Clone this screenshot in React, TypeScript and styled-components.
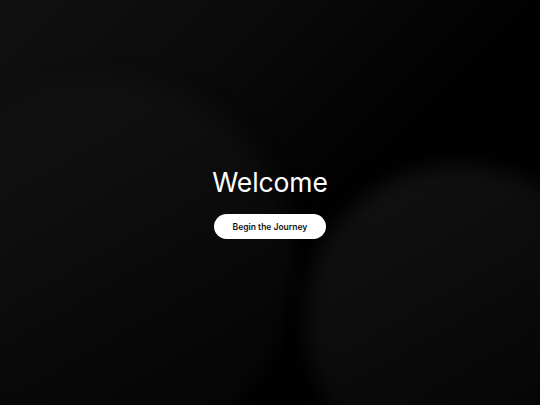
import React from "react";
import styled, { createGlobalStyle } from "styled-components";

const Global = createGlobalStyle`
  html, body { margin: 0; padding: 0; background: #000; }
  #root { width: 100vw; height: 100vh; }
`;

const Page = styled.main`
  position: relative;
  width: 540px;
  height: 405px;
  overflow: hidden;
  background: linear-gradient(135deg, #111111 0%, #0a0a0a 30%, #000000 60%, #000000 100%);
  display: flex;
  align-items: center;
  justify-content: center;
  font-family: Inter, "Noto Sans", sans-serif;
`;

const Orb = styled.div<{ $x: number; $y: number; $r: number; $from: string; $to: string }>`
  position: absolute;
  left: ${(p) => p.$x - p.$r}px;
  top: ${(p) => p.$y - p.$r}px;
  width: ${(p) => p.$r * 2}px;
  height: ${(p) => p.$r * 2}px;
  border-radius: 50%;
  background: linear-gradient(150deg, ${(p) => p.$from} 0%, ${(p) => p.$to} 75%);
  filter: blur(10px);
`;

const Hero = styled.section`
  position: relative;
  z-index: 1;
  display: flex;
  flex-direction: column;
  align-items: center;
  gap: 16px;
`;

const Title = styled.h1`
  margin: 0;
  color: #ffffff;
  font-family: Inter, "Noto Sans", sans-serif;
  font-size: 26.5px;
  font-weight: 400;
  line-height: 32px;
  letter-spacing: -0.1px;
`;

const CTA = styled.button`
  height: 25px;
  padding: 0 19px;
  border: none;
  border-radius: 999px;
  background: #ffffff;
  color: #111111;
  font-family: Inter, "Noto Sans", sans-serif;
  font-size: 8.5px;
  font-weight: 600;
  white-space: nowrap;
  cursor: pointer;
  display: flex;
  align-items: center;
  justify-content: center;
`;

export default function App() {
  return (
    <>
      <Global />
      <Page>
        <Orb $x={110} $y={265} $r={185} $from="#151515" $to="#060606" />
        <Orb $x={460} $y={320} $r={155} $from="#131313" $to="#060606" />
        <Hero>
          <Title>Welcome</Title>
          <CTA>Begin the Journey</CTA>
        </Hero>
      </Page>
    </>
  );
}
